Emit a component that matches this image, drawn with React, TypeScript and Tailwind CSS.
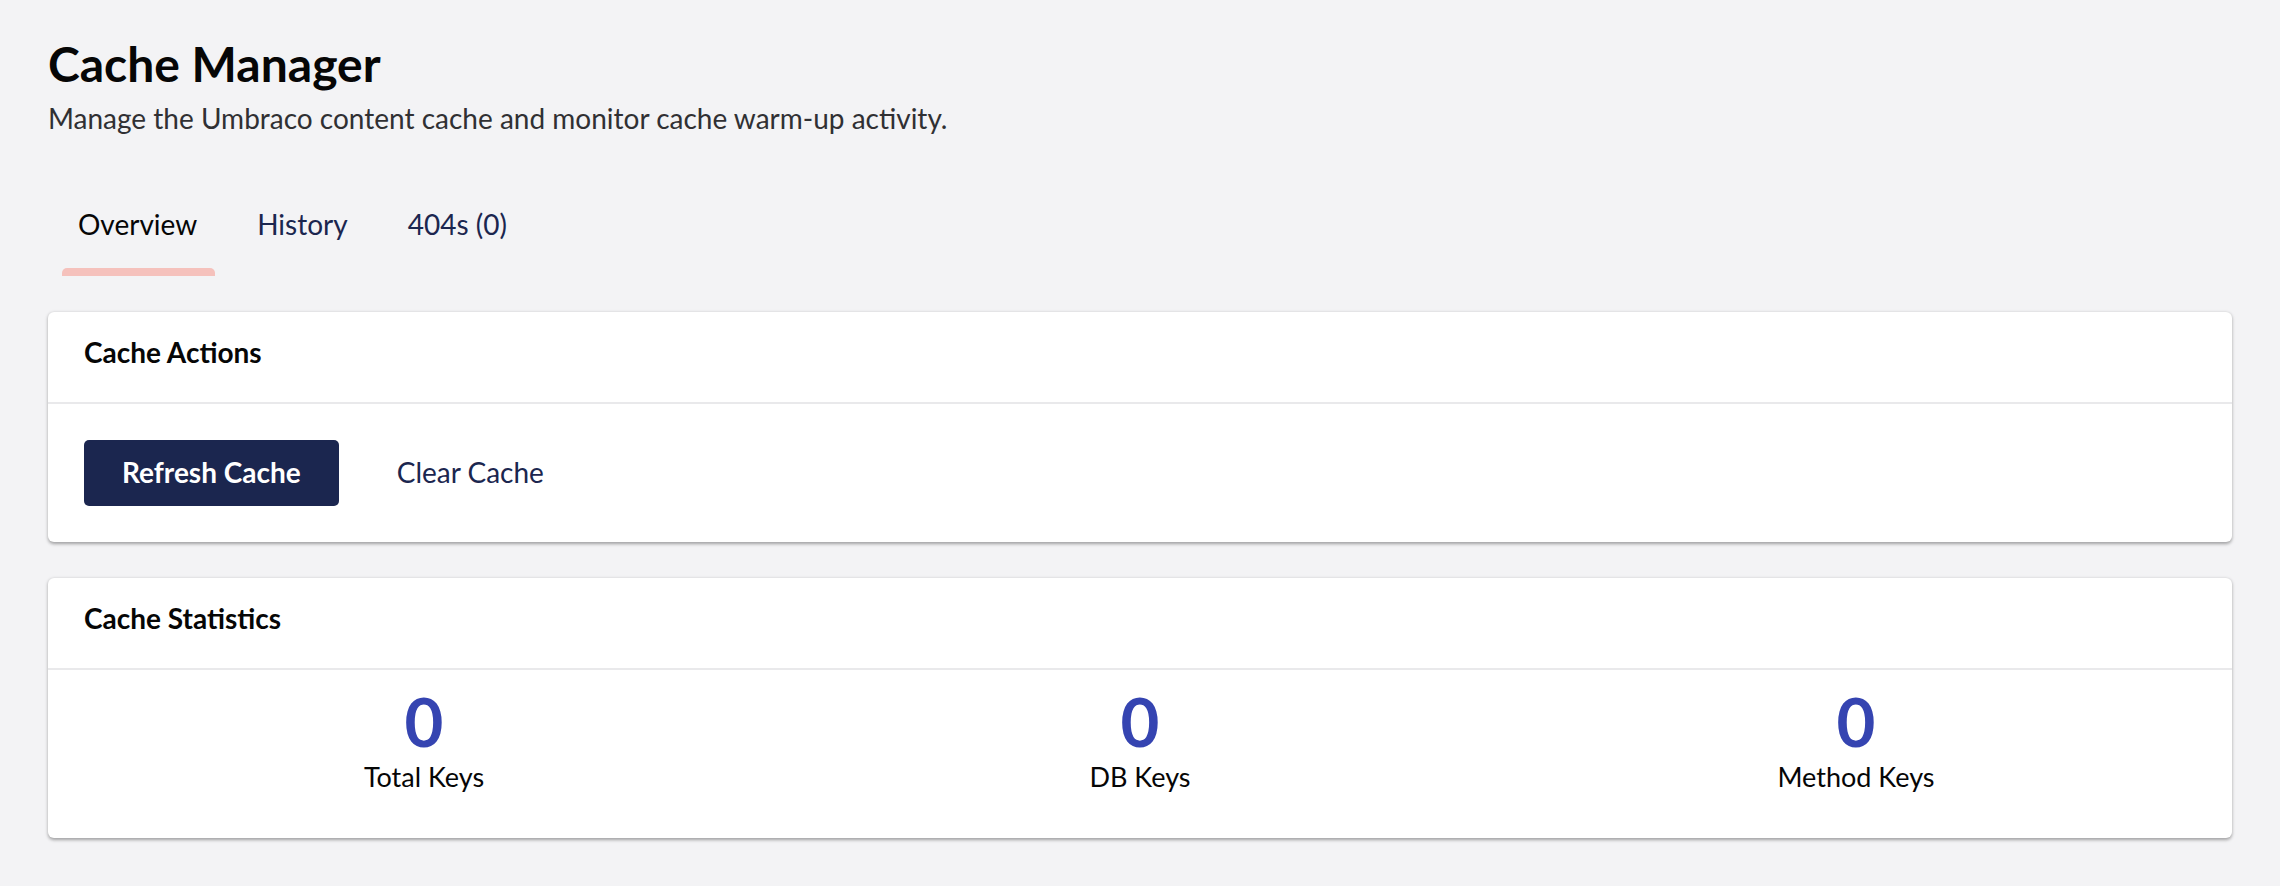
import { ReactNode } from "react";

const tabs = [
  { label: "Overview", active: true },
  { label: "History", active: false },
  { label: "404s (0)", active: false },
];

const stats = [
  { label: "Total Keys", value: 0 },
  { label: "DB Keys", value: 0 },
  { label: "Method Keys", value: 0 },
];

function Box({ title, children }: { title: string; children: ReactNode }) {
  return (
    <section className="rounded-[6px] bg-white shadow-[0_1.5px_4.5px_rgba(0,0,0,0.12),0_1.5px_3px_rgba(0,0,0,0.24)]">
      <div className="h-[92px] border-b-2 border-[#e9e9eb] px-[36px] pt-[24px]">
        <h2 className="text-[28px] font-bold leading-[1.2] text-[#060606]">{title}</h2>
      </div>
      {children}
    </section>
  );
}

export default function App() {
  return (
    <div className="min-h-screen bg-[#f3f3f5] px-[48px] pt-[35px] pb-[48px] font-['Lato','Noto_Sans',sans-serif] text-[#060606]">
      {/* Header */}
      <header>
        <h1 className="text-[48px] font-bold leading-[1.2]">Cache Manager</h1>
        <p className="mt-[9px] text-[28px] leading-[1.2] text-[#303033]">
          Manage the Umbraco content cache and monitor cache warm-up activity.
        </p>
      </header>

      {/* Tabs */}
      <nav className="mt-[43px] flex">
        {tabs.map((tab) => (
          <button
            key={tab.label}
            className={`relative px-[30px] pt-[30px] pb-[34px] text-[28px] leading-[1.2] ${
              tab.active ? "text-[#060606]" : "text-[#1b264f]"
            }`}
          >
            {tab.label}
            {tab.active && (
              <span className="absolute bottom-0 left-[14px] right-[12px] h-[8px] rounded-t-[5px] bg-[#f5c1bc]" />
            )}
          </button>
        ))}
      </nav>

      {/* Content */}
      <main className="mt-[36px] flex flex-col gap-[36px]">
        <Box title="Cache Actions">
          <div className="flex items-center gap-[20px] px-[36px] py-[36px]">
            <button className="flex h-[66px] items-center rounded-[5px] bg-[#1b264f] px-[38px] text-[28px] font-bold leading-[1.2] text-white">
              Refresh Cache
            </button>
            <button className="flex h-[66px] items-center px-[38px] text-[28px] leading-[1.2] text-[#1b264f]">
              Clear Cache
            </button>
          </div>
        </Box>

        <Box title="Cache Statistics">
          <div className="grid grid-cols-3 px-[18px] pt-[11px] pb-[44px]">
            {stats.map((stat) => (
              <div key={stat.label} className="flex flex-col items-center">
                <span className="text-[67px] font-bold leading-[1.2] text-[#3544b1]">{stat.value}</span>
                <span className="text-[27px] leading-[1.2] text-[#060606]">{stat.label}</span>
              </div>
            ))}
          </div>
        </Box>
      </main>
    </div>
  );
}
